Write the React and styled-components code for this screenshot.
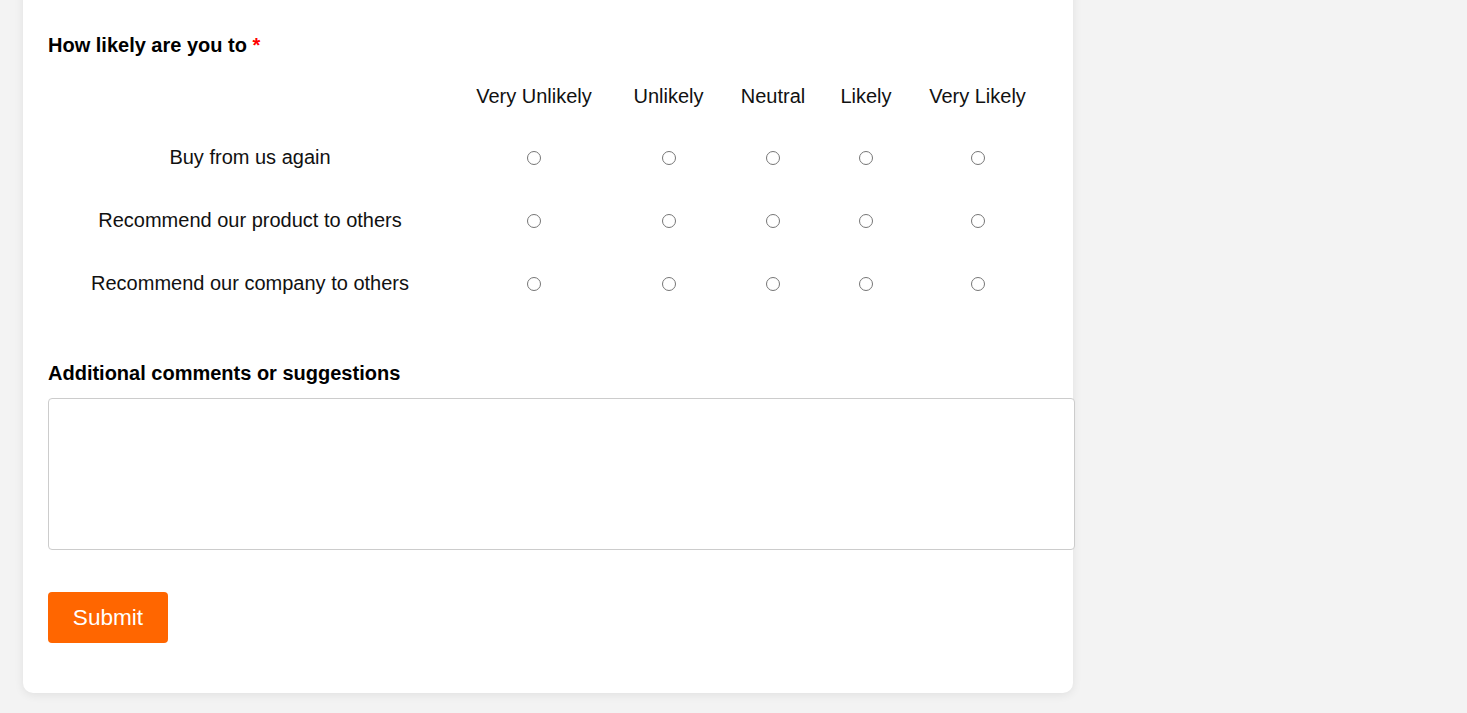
import React from "react";
import styled, { createGlobalStyle } from "styled-components";

const Global = createGlobalStyle`
  html, body { margin: 0; padding: 0; background: #f3f3f3; }
  body { font-family: "Liberation Sans", Arial, sans-serif; color: #000; }
  * { box-sizing: border-box; }
`;

const Page = styled.div`
  padding: 0 0 20px 23px;
  min-height: 713px;
  overflow: hidden;
`;

const Card = styled.form`
  width: 1050px;
  margin-top: -20px;
  background: #fff;
  border-radius: 10px;
  box-shadow: 0 2px 10px rgba(0, 0, 0, 0.08);
  padding: 54px 25px 50px 25px;
`;

const QuestionTitle = styled.h3`
  margin: 0;
  font-size: 20px;
  line-height: 23px;
  font-weight: 700;
`;

const Required = styled.span`
  color: #ff0000;
`;

const Matrix = styled.div`
  display: grid;
  grid-template-columns: 404px 164px 105px 104px 82px 1fr;
  grid-template-rows: 59px repeat(3, 63px);
  align-items: center;
  margin-top: 10px;
  font-size: 20px;
  line-height: 23px;
  color: #111;
`;

const Cell = styled.div`
  text-align: center;
  display: flex;
  justify-content: center;
  align-items: center;
`;

const Radio = styled.input.attrs({ type: "radio" })`
  appearance: none;
  margin: 0;
  width: 14px;
  height: 14px;
  border: 1px solid #767676;
  border-radius: 50%;
  background: #fff;
  cursor: pointer;

  &:checked {
    border: 4px solid #0075ff;
  }
`;

const CommentLabel = styled.label`
  display: block;
  margin-top: 47px;
  font-size: 20px;
  line-height: 23px;
  font-weight: 700;
`;

const TextArea = styled.textarea`
  display: block;
  box-sizing: content-box;
  width: 100%;
  height: 126px;
  margin-top: 13px;
  padding: 12px 13px 12px 12px;
  border: 1px solid #ccc;
  border-radius: 4px;
  resize: none;
  font-family: "Liberation Sans", Arial, sans-serif;
  font-size: 16px;
`;

const SubmitButton = styled.button`
  display: block;
  margin-top: 42px;
  width: 120px;
  height: 51px;
  border: none;
  border-radius: 4px;
  background: #ff6600;
  color: #fff;
  font-family: "Liberation Sans", Arial, sans-serif;
  font-size: 22.6px;
  cursor: pointer;
`;

const scale = ["Very Unlikely", "Unlikely", "Neutral", "Likely", "Very Likely"];
const items = [
  "Buy from us again",
  "Recommend our product to others",
  "Recommend our company to others",
];

export default function App() {
  return (
    <>
      <Global />
      <Page>
        <Card onSubmit={(e) => e.preventDefault()}>
          <QuestionTitle>
            How likely are you to <Required>*</Required>
          </QuestionTitle>
          <Matrix>
            <Cell />
            {scale.map((s) => (
              <Cell key={s}>{s}</Cell>
            ))}
            {items.map((item, r) => (
              <React.Fragment key={item}>
                <Cell>{item}</Cell>
                {scale.map((s) => (
                  <Cell key={s}>
                    <Radio name={`q${r}`} value={s} aria-label={`${item}: ${s}`} />
                  </Cell>
                ))}
              </React.Fragment>
            ))}
          </Matrix>
          <CommentLabel htmlFor="comments">Additional comments or suggestions</CommentLabel>
          <TextArea id="comments" />
          <SubmitButton type="submit">Submit</SubmitButton>
        </Card>
      </Page>
    </>
  );
}
